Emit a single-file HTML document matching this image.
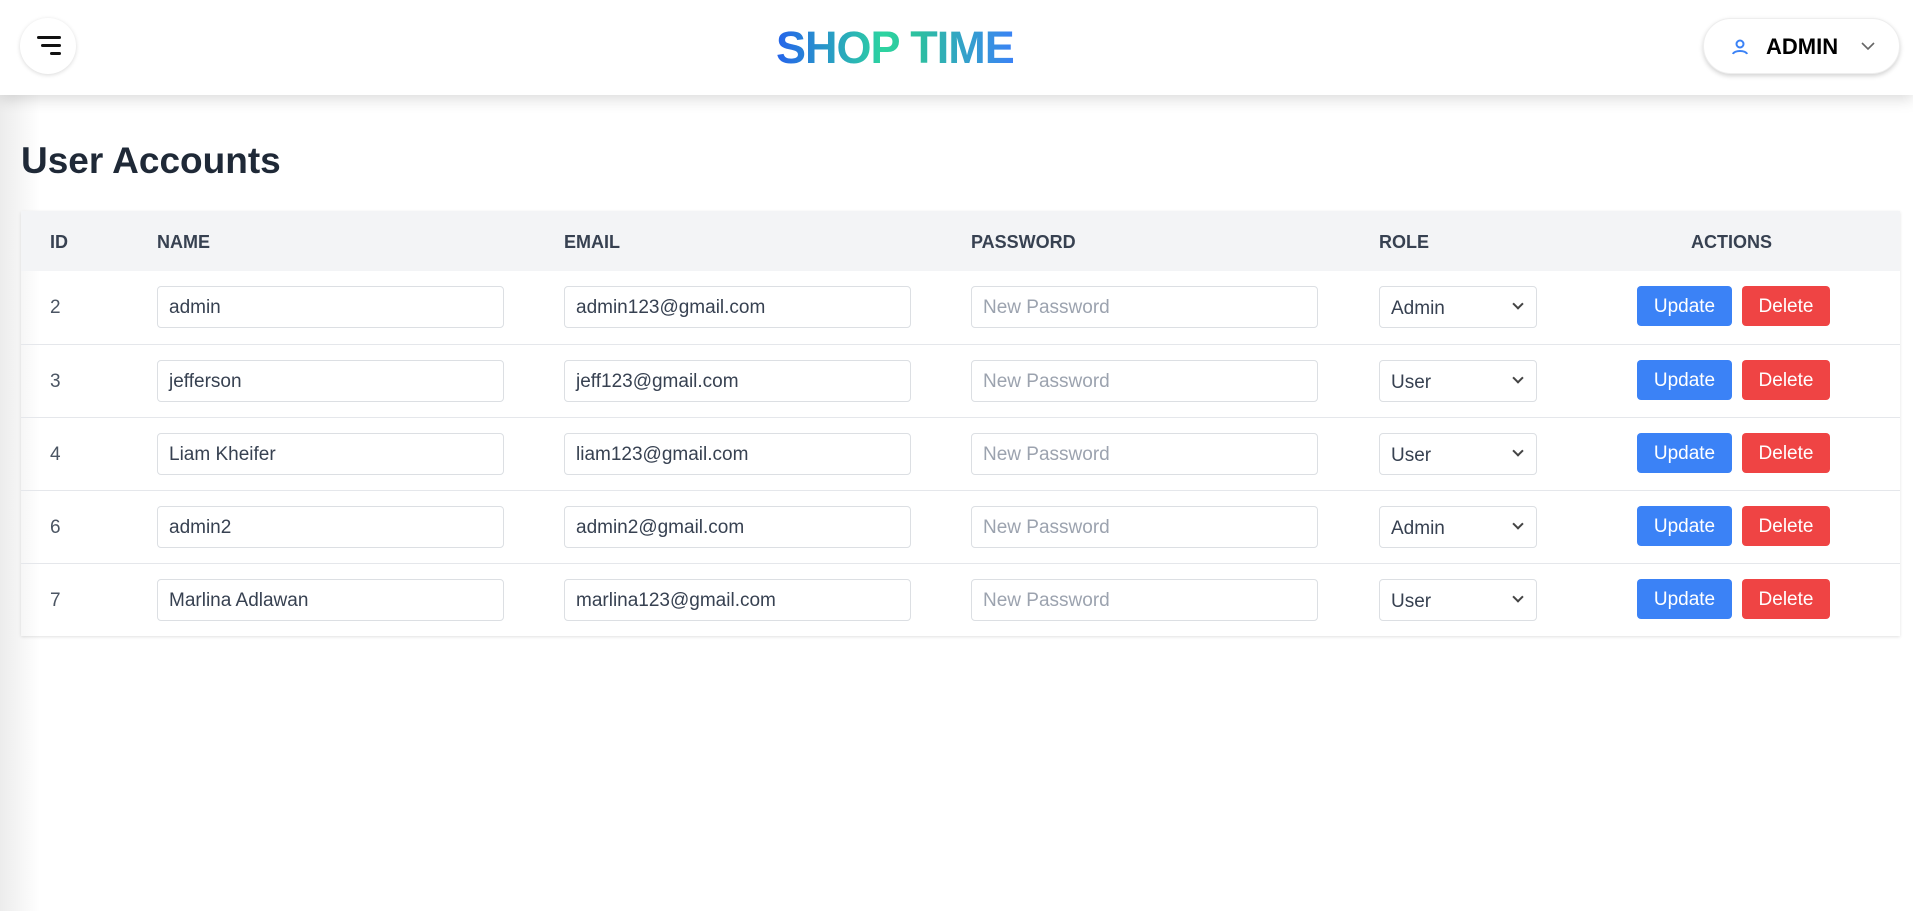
<!DOCTYPE html>
<html><head><meta charset="utf-8"><style>
*{box-sizing:border-box;margin:0;padding:0}
body{width:1913px;height:911px;overflow:hidden;background:#fff;font-family:"Liberation Sans",sans-serif;color:#374151;position:relative}
.side{position:absolute;left:0;top:0;width:40px;height:911px;background:linear-gradient(90deg,#ececec,#fff)}
header{position:absolute;left:0;top:0;width:1913px;height:95px;background:#fff;box-shadow:0 4px 14px rgba(0,0,0,.15);z-index:2}
.ham{position:absolute;left:20px;top:18px;width:56px;height:56px;border-radius:50%;background:#fff;box-shadow:0 1px 4px rgba(0,0,0,.15)}
.ham i{position:absolute;right:17px;height:3px;background:#111;border-radius:2px}
.logo{position:absolute;left:776px;top:22px;font-size:45px;font-weight:bold;letter-spacing:-1px;background:linear-gradient(90deg,#2563eb,#2dd4a0 45%,#2dbfa0 60%,#3b82f6);-webkit-background-clip:text;color:transparent}
.adm{position:absolute;left:1703px;top:18px;width:197px;height:56px;border-radius:28px;background:#fff;box-shadow:0 2px 5px rgba(0,0,0,.18);border:1px solid #eee}
.adm b{position:absolute;left:62px;top:15px;font-size:22px;color:#000}
h1{position:absolute;left:21px;top:140px;font-size:37px;color:#1f2937}
.tbl{position:absolute;left:21px;top:211px;width:1879px;box-shadow:0 1px 3px rgba(0,0,0,.12)}
.hr{height:60px;background:#f3f4f6;position:relative;font-weight:bold;font-size:18px;color:#374151}
.hr span{position:absolute;top:21px}
.r{height:73px;border-top:1px solid #e5e7eb;position:relative;font-size:19px}
.r span{position:absolute;left:29px;top:26px;color:#4b5563}
.in{position:absolute;top:15px;height:42px;border:1px solid #dcdfe3;border-radius:4px;padding:10px 11px;color:#374151;font-size:19px;background:#fff}
.ph{color:#9ca3af}
.sel{position:absolute;left:1358px;top:15px;width:158px;height:42px;border:1px solid #dcdfe3;border-radius:4px;padding:11px 11px;font-size:19px}
.sel:after{content:"";position:absolute;right:14px;top:13px;width:6px;height:6px;border-right:2px solid #444;border-bottom:2px solid #444;transform:rotate(45deg)}
.b{position:absolute;top:15px;height:40px;border-radius:4px;color:#fff;font-size:19px;text-align:center;line-height:42px}
</style></head><body>
<div class="side"></div>
<header>
<div class="ham"><i style="top:18px;width:24px;right:15px"></i><i style="top:26px;width:20px;right:15px"></i><i style="top:34px;width:11px;right:15px"></i></div>
<div class="logo">SHOP TIME</div>
<div class="adm"><svg style="position:absolute;left:27px;top:19px" width="18" height="18" viewBox="0 0 18 18" fill="none" stroke="#3b82f6" stroke-width="2"><circle cx="9" cy="6" r="3.5"/><path d="M2 16c1-4 13-4 14 0"/></svg><b>ADMIN</b><svg style="position:absolute;left:157px;top:23px" width="14" height="9" viewBox="0 0 14 9" fill="none" stroke="#666" stroke-width="1.6"><path d="M1 1l6 6 6-6"/></svg></div>
</header>
<h1>User Accounts</h1>
<div class="tbl">
<div class="hr"><span style="left:29px">ID</span><span style="left:136px">NAME</span><span style="left:543px">EMAIL</span><span style="left:950px">PASSWORD</span><span style="left:1358px">ROLE</span><span style="left:1670px">ACTIONS</span></div>
<div class="r" style="border-top:none"><span>2</span><div class="in" style="left:136px;width:347px">admin</div><div class="in" style="left:543px;width:347px">admin123@gmail.com</div><div class="in ph" style="left:950px;width:347px">New Password</div><div class="sel">Admin</div><div class="b" style="left:1616px;width:95px;background:#3b82f6">Update</div><div class="b" style="left:1721px;width:88px;background:#ef4444">Delete</div></div>
<div class="r"><span>3</span><div class="in" style="left:136px;width:347px">jefferson</div><div class="in" style="left:543px;width:347px">jeff123@gmail.com</div><div class="in ph" style="left:950px;width:347px">New Password</div><div class="sel">User</div><div class="b" style="left:1616px;width:95px;background:#3b82f6">Update</div><div class="b" style="left:1721px;width:88px;background:#ef4444">Delete</div></div>
<div class="r"><span>4</span><div class="in" style="left:136px;width:347px">Liam Kheifer</div><div class="in" style="left:543px;width:347px">liam123@gmail.com</div><div class="in ph" style="left:950px;width:347px">New Password</div><div class="sel">User</div><div class="b" style="left:1616px;width:95px;background:#3b82f6">Update</div><div class="b" style="left:1721px;width:88px;background:#ef4444">Delete</div></div>
<div class="r"><span>6</span><div class="in" style="left:136px;width:347px">admin2</div><div class="in" style="left:543px;width:347px">admin2@gmail.com</div><div class="in ph" style="left:950px;width:347px">New Password</div><div class="sel">Admin</div><div class="b" style="left:1616px;width:95px;background:#3b82f6">Update</div><div class="b" style="left:1721px;width:88px;background:#ef4444">Delete</div></div>
<div class="r"><span>7</span><div class="in" style="left:136px;width:347px">Marlina Adlawan</div><div class="in" style="left:543px;width:347px">marlina123@gmail.com</div><div class="in ph" style="left:950px;width:347px">New Password</div><div class="sel">User</div><div class="b" style="left:1616px;width:95px;background:#3b82f6">Update</div><div class="b" style="left:1721px;width:88px;background:#ef4444">Delete</div></div>
</div>
</body></html>
